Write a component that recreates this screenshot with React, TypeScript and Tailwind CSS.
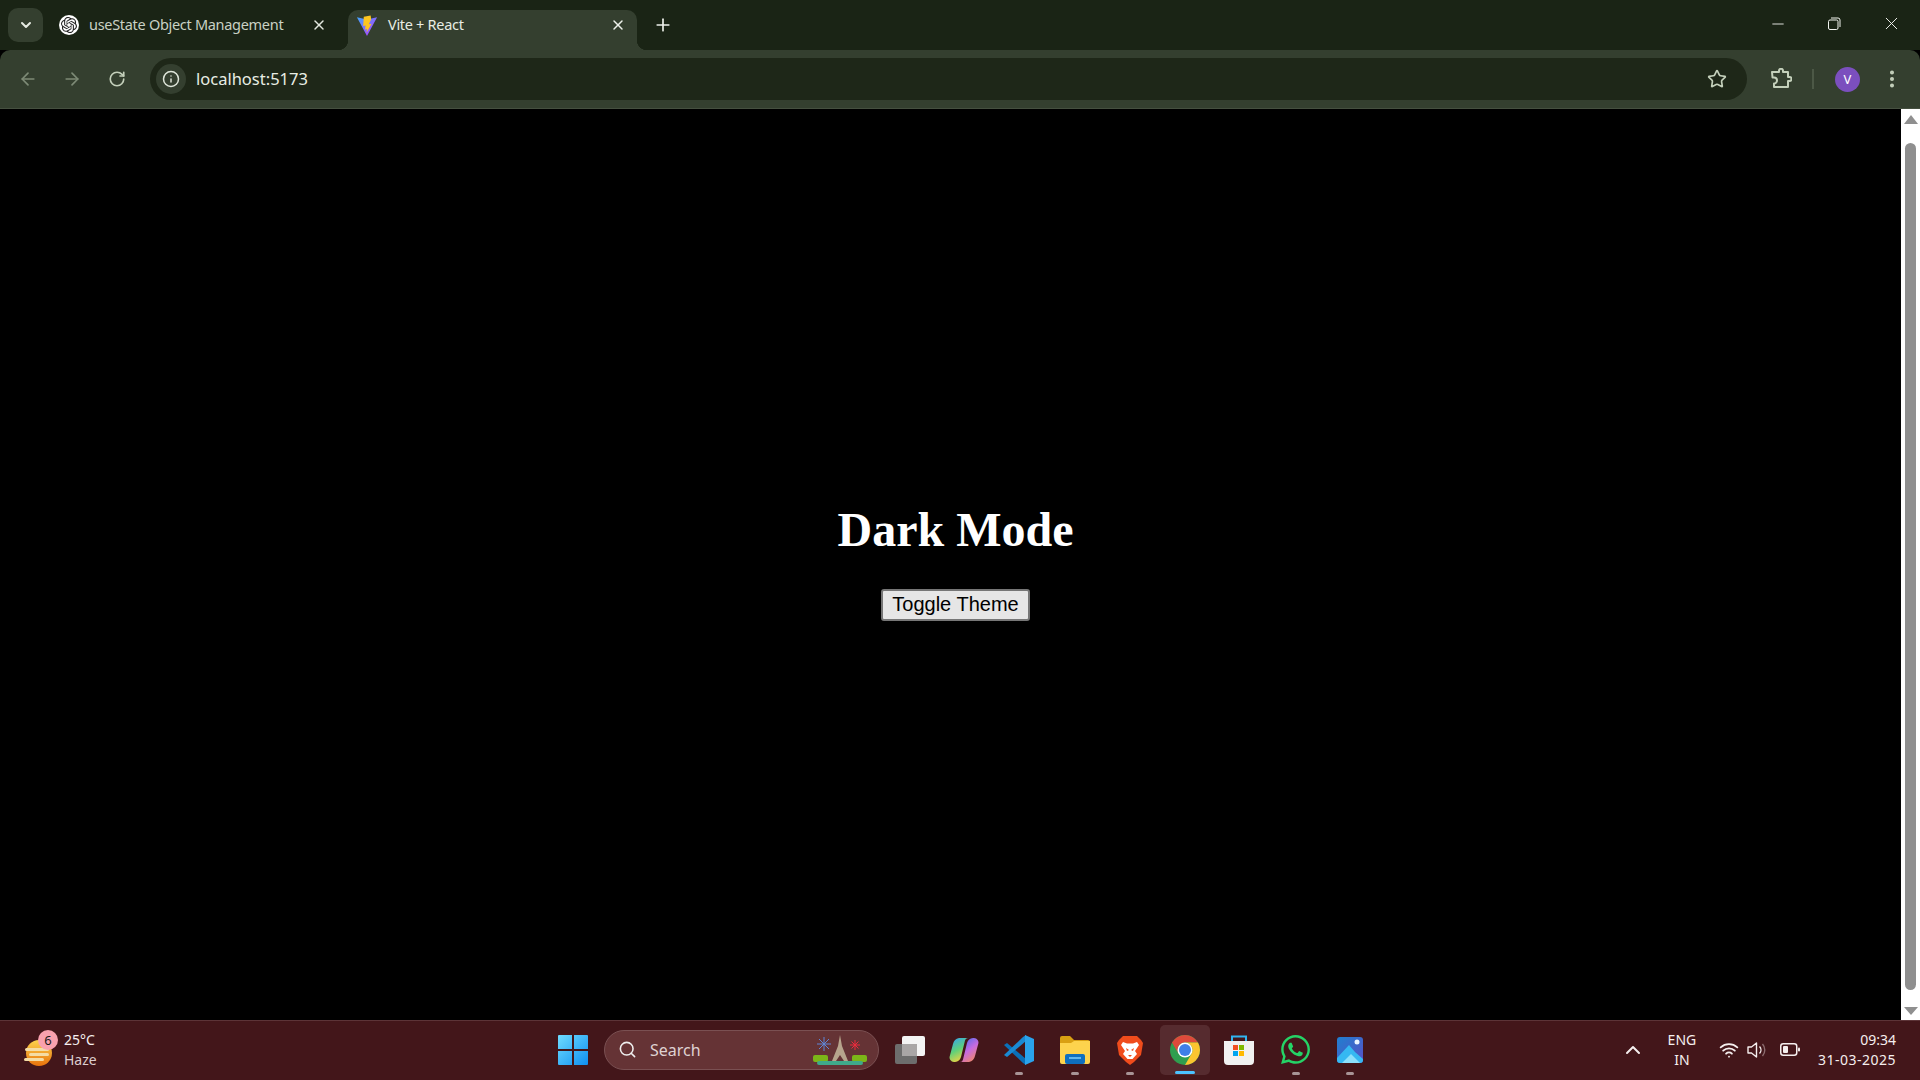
import { ArrowLeft, ArrowRight, ChevronDown, ChevronUp, EllipsisVertical, Info, Minus, Plus, RotateCw, Search, Star, Wifi, X } from 'lucide-react';
import { SiOpenai } from 'react-icons/si';
import { FaWhatsapp } from 'react-icons/fa';

const uiFont = 'font-["Noto_Sans",sans-serif]';

function ViteLogo() {
  return (
    <svg width="22" height="24" viewBox="0 0 24 24">
      <defs>
        <linearGradient id="vite-a" x1="0" y1="0" x2="1" y2="1">
          <stop offset="0" stopColor="#41a6ff" />
          <stop offset="1" stopColor="#bd34fe" />
        </linearGradient>
      </defs>
      <path d="M1 2.5 L12 23 L23 2.5 L12 5 Z" fill="url(#vite-a)" />
      <path d="M16 .5 L8.5 2 L7.8 12 L10.5 11.5 L9.8 16 L12 15 L11.6 19 L17 9.5 L14 10 L16.5 4.5 Z" fill="#fdc520" />
    </svg>
  );
}

function RestoreIcon() {
  return (
    <svg width="14" height="14" viewBox="0 0 14 14" fill="none" stroke="#f2f4ef" strokeWidth="1">
      <rect x="1.5" y="3" width="9.5" height="9.5" rx="1.5" />
      <path d="M4 1 H11 A2 2 0 0 1 13 3 V10" />
    </svg>
  );
}

function PuzzleIcon() {
  return (
    <svg width="22" height="22" viewBox="0 0 22 22" fill="none" stroke="#c4d0bb" strokeWidth="2" strokeLinejoin="round">
      <path d="M2 4 H9 V2.8 A2 2 0 0 1 13 2.8 V4 H18 V9 H19.5 A2 2 0 0 1 19.5 13 H18 V19 H4 V15.5 A3 3 0 0 0 4 9.5 H2.5 Z" />
    </svg>
  );
}

function WeatherIcon() {
  return (
    <div className="relative w-[34px] h-[36px] shrink-0">
      <svg width="30" height="34" viewBox="0 0 30 34" className="mt-[3px]">
        <defs>
          <linearGradient id="sun" x1="0" y1="0" x2="0" y2="1">
            <stop offset="0" stopColor="#fcd34d" />
            <stop offset="1" stopColor="#e8720c" />
          </linearGradient>
        </defs>
        <circle cx="15" cy="18" r="13" fill="url(#sun)" />
        <rect x="1" y="13" width="24" height="3" rx="1.5" fill="#f4dca5" />
        <rect x="5" y="18" width="20" height="3" rx="1.5" fill="#f4dca5" />
        <rect x="0" y="23" width="20" height="3" rx="1.5" fill="#f4dca5" />
      </svg>
      <span className='absolute left-[14px] top-[-2px] w-[20px] h-[20px] rounded-full bg-[#f9a1ae] text-[#1a1a1a] text-[13px] leading-[20px] text-center font-["Noto_Sans",sans-serif]'>6</span>
    </div>
  );
}

function WindowsLogo() {
  return (
    <svg width="30" height="30" viewBox="0 0 30 30">
      <defs>
        <linearGradient id="win" x1="0" y1="0" x2="1" y2="1">
          <stop offset="0" stopColor="#6fdcff" />
          <stop offset="1" stopColor="#0f8ff0" />
        </linearGradient>
      </defs>
      <path d="M1 0 H14 V14 H0 V1 A1 1 0 0 1 1 0 Z M16 0 H29 A1 1 0 0 1 30 1 V14 H16 Z M0 16 H14 V30 H1 A1 1 0 0 1 0 29 Z M16 16 H30 V29 A1 1 0 0 1 29 30 H16 Z" fill="url(#win)" />
    </svg>
  );
}

function SearchArt() {
  return (
    <svg width="54" height="32" viewBox="0 0 54 32">
      <g stroke="#5f86d6" strokeWidth="1">
        <path d="M11 3 V17 M4 10 H18 M6 5 L16 15 M16 5 L6 15" />
      </g>
      <g stroke="#ee2b3c" strokeWidth="1">
        <path d="M42 6 V16 M37 11 H47 M38.5 7.5 L45.5 14.5 M45.5 7.5 L38.5 14.5" />
      </g>
      <path d="M27 1 L29 12 L35 27 H31 L27 21 L23 27 H19 L25 12 Z" fill="#b7a48c" />
      <rect x="0" y="21" width="15" height="7" rx="2" fill="#7cb518" />
      <rect x="39" y="21" width="15" height="7" rx="2" fill="#7cb518" />
      <rect x="4" y="27" width="46" height="4" rx="2" fill="#3fa98a" />
    </svg>
  );
}

function TaskViewIcon() {
  return (
    <svg width="30" height="28" viewBox="0 0 30 28">
      <rect x="0" y="8" width="22" height="20" rx="2" fill="#6d6d6d" />
      <rect x="7" y="0" width="23" height="20" rx="2" fill="#f4f4f4" />
      <rect x="7" y="8" width="15" height="12" fill="#a9a6a6" />
    </svg>
  );
}

function CopilotIcon() {
  return (
    <svg width="30" height="28" viewBox="0 0 30 28">
      <defs>
        <linearGradient id="cop-a" x1="0.2" y1="0" x2="0.6" y2="1">
          <stop offset="0" stopColor="#37a7e8" />
          <stop offset="0.5" stopColor="#5fd07a" />
          <stop offset="1" stopColor="#f7d43f" />
        </linearGradient>
        <linearGradient id="cop-b" x1="0.2" y1="0" x2="0.8" y2="1">
          <stop offset="0" stopColor="#4a6cf0" />
          <stop offset="0.5" stopColor="#c76be0" />
          <stop offset="1" stopColor="#f58a5c" />
        </linearGradient>
      </defs>
      <path d="M10 2 H19 A3 3 0 0 0 16 4.5 L12 21 A7 7 0 0 1 6 26 H5 A4.5 4.5 0 0 1 .8 20 L4 8 A8 8 0 0 1 10 2 Z" fill="url(#cop-a)" />
      <path d="M20 26 H11 A3 3 0 0 0 14 23.5 L18 7 A7 7 0 0 1 24 2 H25 A4.5 4.5 0 0 1 29.2 8 L26 20 A8 8 0 0 1 20 26 Z" fill="url(#cop-b)" />
    </svg>
  );
}

function VsCodeIcon() {
  return (
    <svg width="32" height="32" viewBox="0 0 32 32">
      <path d="M1 11 L4 9 L23 25 L23 31 L20 29 Z" fill="#0a70b8" />
      <path d="M1 21 L4 23 L23 7 L23 1 L20 3 Z" fill="#1a8ad4" />
      <path d="M22 1 L31 5 V27 L22 31 Z" fill="#2aa3ec" />
    </svg>
  );
}

function FolderIcon() {
  return (
    <svg width="30" height="28" viewBox="0 0 30 28">
      <path d="M0 2 A2 2 0 0 1 2 0 H10 L14 4 H28 A2 2 0 0 1 30 6 V12 H0 Z" fill="#d9a012" />
      <path d="M0 7 H11 L14 5 H30 V26 A2 2 0 0 1 28 28 H2 A2 2 0 0 1 0 26 Z" fill="#fdd34d" />
      <rect x="5" y="18" width="20" height="10" rx="2" fill="#0f6fbe" />
      <rect x="9" y="21" width="12" height="2" fill="#5fb6ef" />
    </svg>
  );
}

function BraveIcon() {
  return (
    <svg width="26" height="30" viewBox="0 0 26 30">
      <path d="M6 1 H20 L24 5 L26 8 L24 20 L17 27 L13 30 L9 27 L2 20 L0 8 L2 5 Z" fill="#f04c1c" />
      <path d="M6 7 L10 8.5 H16 L20 7 L22 10 L18 16 L20 19 L15.5 24 H10.5 L6 19 L8 16 L4 10 Z" fill="#ffffff" />
      <path d="M9 13 L12 15 L10 16 Z M17 13 L14 15 L16 16 Z M11 20 H15 L13 22 Z" fill="#f04c1c" />
    </svg>
  );
}

function ChromeIcon() {
  return (
    <svg width="30" height="30" viewBox="4 4 40 40">
      <circle cx="24" cy="24" r="20" fill="#2f9e4f" />
      <path d="M6.68 14 A20 20 0 0 1 41.32 14 H24 A10 10 0 0 0 15.34 29 Z" fill="#dd4a3b" />
      <path d="M41.32 14 A20 20 0 0 1 24 44 L32.66 29 A10 10 0 0 0 24 14 Z" fill="#fbc52f" />
      <circle cx="24" cy="24" r="10" fill="#ffffff" />
      <circle cx="24" cy="24" r="8" fill="#3f7fe8" />
    </svg>
  );
}

function StoreIcon() {
  return (
    <svg width="30" height="30" viewBox="0 0 30 30">
      <path d="M8 6 V1.5 H22 V6" fill="none" stroke="#31b4ef" strokeWidth="2" />
      <path d="M0 6 H30 V26 A4 4 0 0 1 26 30 H4 A4 4 0 0 1 0 26 Z" fill="#f1f1f1" />
      <rect x="9" y="10" width="5" height="5" fill="#f25022" />
      <rect x="15" y="10" width="5" height="5" fill="#7fba00" />
      <rect x="9" y="16" width="5" height="5" fill="#00a4ef" />
      <rect x="15" y="16" width="5" height="5" fill="#ffb900" />
    </svg>
  );
}

function PhotosIcon() {
  return (
    <svg width="26" height="26" viewBox="0 0 26 26">
      <defs>
        <linearGradient id="ph" x1="0" y1="0" x2="1" y2="1">
          <stop offset="0" stopColor="#1f7fd0" />
          <stop offset="1" stopColor="#5a4fc4" />
        </linearGradient>
      </defs>
      <rect width="26" height="26" rx="3" fill="url(#ph)" />
      <circle cx="20" cy="5" r="2.5" fill="#e8f4ff" />
      <path d="M0 21 L12 8 L18 15 L26 22 V23 A3 3 0 0 1 23 26 H3 A3 3 0 0 1 0 23 Z" fill="#35b8f2" />
      <path d="M5 26 L14 17 L23 26 Z" fill="#8ce0fb" />
    </svg>
  );
}

function SpeakerIcon() {
  return (
    <svg width="22" height="18" viewBox="0 0 22 18" fill="none" stroke="#f5eeee" strokeWidth="1.4">
      <path d="M1 6 H4.5 L9.5 2 V16 L4.5 12 H1 Z" strokeLinejoin="round" />
      <path d="M12.5 5.5 A5 5 0 0 1 12.5 12.5" />
      <path d="M15.5 3 A9 9 0 0 1 15.5 15" stroke="#8b6b6e" />
    </svg>
  );
}

function BatteryIcon() {
  return (
    <svg width="20" height="13" viewBox="0 0 20 13">
      <rect x="0.75" y="0.75" width="16" height="11.5" rx="2.5" fill="none" stroke="#f5eeee" strokeWidth="1.5" />
      <rect x="3" y="3" width="5" height="7" rx="1" fill="#f5eeee" />
      <rect x="18" y="4.5" width="2" height="4" rx="1" fill="#f5eeee" />
    </svg>
  );
}

function Pip({ active = false }: { active?: boolean }) {
  return <span className={active ? 'block w-5 h-[3px] rounded-full bg-[#4cc2ff]' : 'block w-2 h-[3px] rounded-full bg-[#a89496]'} />;
}

export default function App() {
  return (
    <div className={`h-screen w-full flex flex-col overflow-hidden bg-black ${uiFont}`}>
      {/* Tab strip */}
      <div className="h-[50px] shrink-0 bg-[#1a2415] flex items-end pl-[8px] text-[#d7ded2]">
        <div className="w-[35px] h-[34px] mb-[8px] mr-[10px] rounded-[10px] bg-[#343f2f] flex items-center justify-center">
          <ChevronDown className="w-4 h-4 text-[#e6ebe2]" strokeWidth={3} />
        </div>
        <div className="w-[295px] h-10 flex items-center pb-[10px] pl-[6px] pr-[21px]">
          <span className="w-5 h-5 rounded-full bg-white flex items-center justify-center shrink-0">
            <SiOpenai className="w-4 h-4 text-[#222]" />
          </span>
          <span className="ml-[10px] text-[14.5px] tracking-[-0.3px] text-[#c9d1c4]">useState Object Management</span>
          <X className="ml-auto w-4 h-4 text-[#e3e8df]" strokeWidth={2.2} />
        </div>
        <div className="relative w-[289px] h-10 rounded-t-[10px] bg-[#343f2f] flex items-center pb-[2px] pl-[8px] pr-[11px]">
          {/* flared bottom corners of the active tab */}
          <span className="absolute -left-[10px] bottom-0 w-[10px] h-[10px] bg-[radial-gradient(circle_at_0_0,transparent_10px,#343f2f_10.5px)]" />
          <span className="absolute -right-[10px] bottom-0 w-[10px] h-[10px] bg-[radial-gradient(circle_at_100%_0,transparent_10px,#343f2f_10.5px)]" />
          <span className="-mt-[6px]"><ViteLogo /></span>
          <span className="-mt-[8px] ml-[10px] text-[14.5px] tracking-[-0.3px] text-[#e8ede4]">Vite + React</span>
          <X className="-mt-[8px] ml-auto w-4 h-4 text-[#eef1eb]" strokeWidth={2.2} />
        </div>
        <div className="ml-[16px] mb-[15px] w-[20px] h-[20px] flex items-center justify-center">
          <Plus className="w-5 h-5 text-[#eef1eb]" strokeWidth={2} />
        </div>
        <div className="ml-auto flex items-center h-full pb-[3px] text-[#f2f4ef]">
          <div className="w-14 flex justify-center"><Minus className="w-[18px] h-[18px]" strokeWidth={1.2} /></div>
          <div className="w-[56px] flex justify-center"><RestoreIcon /></div>
          <div className="w-[58px] flex justify-center"><X className="w-[21px] h-[21px]" strokeWidth={1.1} /></div>
        </div>
      </div>

      {/* Toolbar */}
      <div className="h-[59px] shrink-0 bg-[#343f2f] rounded-t-[10px] border-b border-[#465040] flex items-center pl-[18px] pr-[15px]">
        <ArrowLeft className="w-[20px] h-[20px] text-[#7d8a76]" strokeWidth={2} />
        <ArrowRight className="ml-[24px] w-[20px] h-[20px] text-[#7d8a76]" strokeWidth={2} />
        <RotateCw className="ml-[26px] w-[18px] h-[18px] text-[#c4d0bb]" strokeWidth={2.2} />
        <div className="ml-[24px] w-[1597px] h-[42px] rounded-full bg-[#1e2718] flex items-center pl-[6px] pr-[20px]">
          <span className="w-[30px] h-[30px] rounded-full bg-[#343f2f] flex items-center justify-center">
            <Info className="w-[18px] h-[18px] text-[#dfe6da]" strokeWidth={2} />
          </span>
          <span className="ml-[10px] text-[16.5px] text-[#e8ede4]">localhost:5173</span>
          <Star className="ml-auto w-[20px] h-[20px] text-[#c4d0bb]" strokeWidth={2} />
        </div>
        <div className="ml-[23px]"><PuzzleIcon /></div>
        <span className="ml-[20px] w-[2px] h-[20px] bg-[#4c5846]" />
        <span className="ml-[21px] w-[25px] h-[25px] rounded-full bg-[#7b4fbe] text-white text-[13px] leading-[25px] text-center">V</span>
        <EllipsisVertical className="ml-[21px] w-[22px] h-[22px] text-[#c4d0bb]" strokeWidth={2.4} />
      </div>

      {/* Page */}
      <div className="flex-1 min-h-0 flex">
        <main className="flex-1 pl-[10px] bg-black flex flex-col items-center pt-[393px]">
          <h1 className='font-["Liberation_Serif",serif] font-bold text-[48px] leading-[55px] text-white'>Dark Mode</h1>
          <button className='mt-[32px] w-[149px] h-[32px] pb-[2px] font-["Liberation_Sans",sans-serif] text-[20px] leading-[22px] text-black bg-[#e6e6e6] border-2 border-[#767676] rounded-[3px]'>
            Toggle Theme
          </button>
        </main>
        <aside className="w-[19px] bg-white flex flex-col items-center">
          <span className="mt-[6px] w-0 h-0 border-x-[7px] border-x-transparent border-b-[9px] border-b-[#8f8f8f]" />
          <div className="mt-[19px] flex-1 w-[11px] rounded-full bg-[#8f8f8f]" />
          <span className="mt-[17px] mb-[5px] w-0 h-0 border-x-[7px] border-x-transparent border-t-[8px] border-t-[#8f8f8f]" />
        </aside>
      </div>

      {/* Taskbar */}
      <div className="h-[60px] shrink-0 bg-[#43161a] border-t border-[#5c3337] pb-[2px] flex items-center text-[#f5eeee]">
        <div className="w-[558px] shrink-0 flex items-center pl-[24px]">
          <WeatherIcon />
          <div className="ml-[6px] flex flex-col text-[14px] leading-[20px]">
            <span>25°C</span>
            <span className="text-[#dccdce]">Haze</span>
          </div>
        </div>
        <WindowsLogo />
        <div className="ml-[16px] w-[275px] h-[40px] rounded-full bg-[#653335] border border-[#7a5052] flex items-center pl-[13px] pr-[11px]">
          <Search className="w-[19px] h-[19px] text-[#eee]" strokeWidth={2} />
          <span className="ml-[13px] text-[16px] text-[#dfd2d2]">Search</span>
          <span className="ml-auto"><SearchArt /></span>
        </div>
        <div className="ml-[16px]"><TaskViewIcon /></div>
        <div className="ml-[24px]"><CopilotIcon /></div>
        <div className="ml-[24px] relative flex flex-col items-center">
          <VsCodeIcon />
          <span className="absolute -bottom-[9px]"><Pip /></span>
        </div>
        <div className="ml-[25px] relative flex flex-col items-center">
          <FolderIcon />
          <span className="absolute -bottom-[11px]"><Pip /></span>
        </div>
        <div className="ml-[27px] relative flex flex-col items-center">
          <BraveIcon />
          <span className="absolute -bottom-[10px]"><Pip /></span>
        </div>
        <div className="ml-[17px] w-[50px] h-[50px] rounded-[5px] bg-[#562b2f] relative flex items-center justify-center">
          <ChromeIcon />
          <span className="absolute bottom-[1px]"><Pip active /></span>
        </div>
        <div className="ml-[14px]"><StoreIcon /></div>
        <div className="ml-[25px] relative flex flex-col items-center">
          <FaWhatsapp className="w-[33px] h-[33px] text-[#25d366]" />
          <span className="absolute -bottom-[9px]"><Pip /></span>
        </div>
        <div className="ml-[25px] relative flex flex-col items-center">
          <PhotosIcon />
          <span className="absolute -bottom-[12px]"><Pip /></span>
        </div>

        <div className="ml-auto flex items-center pr-[24px]">
          <ChevronUp className="w-[24px] h-[24px]" strokeWidth={2} />
          <div className="ml-[19px] w-[36px] flex flex-col items-center text-[14px] leading-[20px]">
            <span>ENG</span>
            <span>IN</span>
          </div>
          <Wifi className="ml-[19px] w-[20px] h-[20px]" strokeWidth={2.2} />
          <span className="ml-[8px]"><SpeakerIcon /></span>
          <span className="ml-[11px]"><BatteryIcon /></span>
          <div className="ml-[18px] flex flex-col items-end text-[14px] leading-[20px]">
            <span>09:34</span>
            <span className="tracking-[0.5px]">31-03-2025</span>
          </div>
        </div>
      </div>
    </div>
  );
}
